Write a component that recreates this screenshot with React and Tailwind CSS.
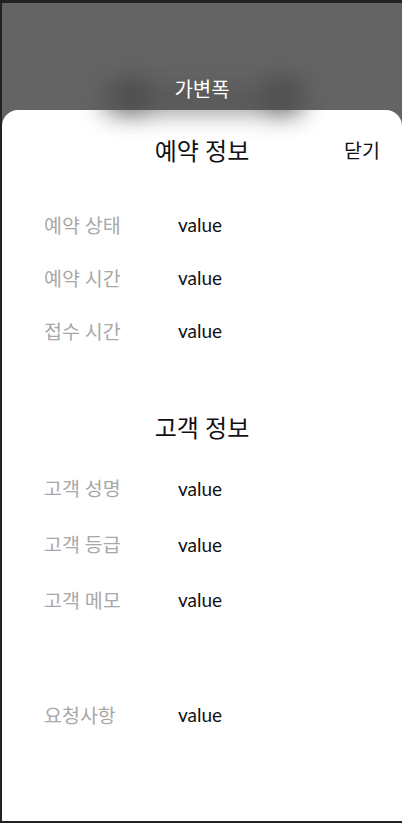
import React from 'react';

const font = { fontFamily: "Lato, 'Noto Sans CJK KR', sans-serif" };

function Row({ label, value, className = 'h-[53px]' }) {
  return (
    <div className={`flex items-center pl-[42px] ${className}`}>
      <span className="w-[134px] text-[19.5px] text-[#a8a8a8]">{label}</span>
      <span className="text-[19px] text-[#111]">{value}</span>
    </div>
  );
}

export default function App() {
  return (
    <div className="w-[402px] h-[823px] bg-[#222] pl-[2px] pt-[3px] pb-[2px] flex flex-col" style={font}>
      <div className="flex-1 bg-[#646464] flex flex-col overflow-hidden">
        {/* page header behind the sheet */}
        <div className="relative h-[107px] flex items-end justify-center pb-[8px]">
          <div className="absolute left-[112px] top-[76px] w-[36px] h-[34px] rounded-full bg-[#333] blur-md opacity-50" />
          <div className="absolute left-[262px] top-[76px] w-[36px] h-[34px] rounded-full bg-[#333] blur-md opacity-50" />
          <div className="absolute left-[100px] top-[84px] w-[200px] h-[26px] bg-[#505050] blur-md opacity-60" />
          <span className="relative text-[20px] leading-[26px] text-white">가변폭</span>
        </div>

        {/* bottom sheet */}
        <div className="flex-1 bg-white rounded-t-[16px]">
          <div className="relative h-[82px] flex items-center justify-center">
            <span className="text-[24px] text-[#111]">예약 정보</span>
            <button className="absolute right-[22px] text-[19.5px] text-[#111]">닫기</button>
          </div>
          <div className="mt-[7px]">
            <Row label="예약 상태" value="value" />
            <Row label="예약 시간" value="value" />
            <Row label="접수 시간" value="value" />
          </div>
          <div className="mt-[43px] h-[53px] flex items-center justify-center">
            <span className="text-[24px] text-[#111]">고객 정보</span>
          </div>
          <div className="mt-[8px]">
            <Row label="고객 성명" value="value" className="h-[54px]" />
            <Row label="고객 등급" value="value" className="h-[58px]" />
            <Row label="고객 메모" value="value" className="h-[53px]" />
          </div>
          <Row label="요청사항" value="value" className="h-[53px] mt-[62px]" />
        </div>
      </div>
    </div>
  );
}
